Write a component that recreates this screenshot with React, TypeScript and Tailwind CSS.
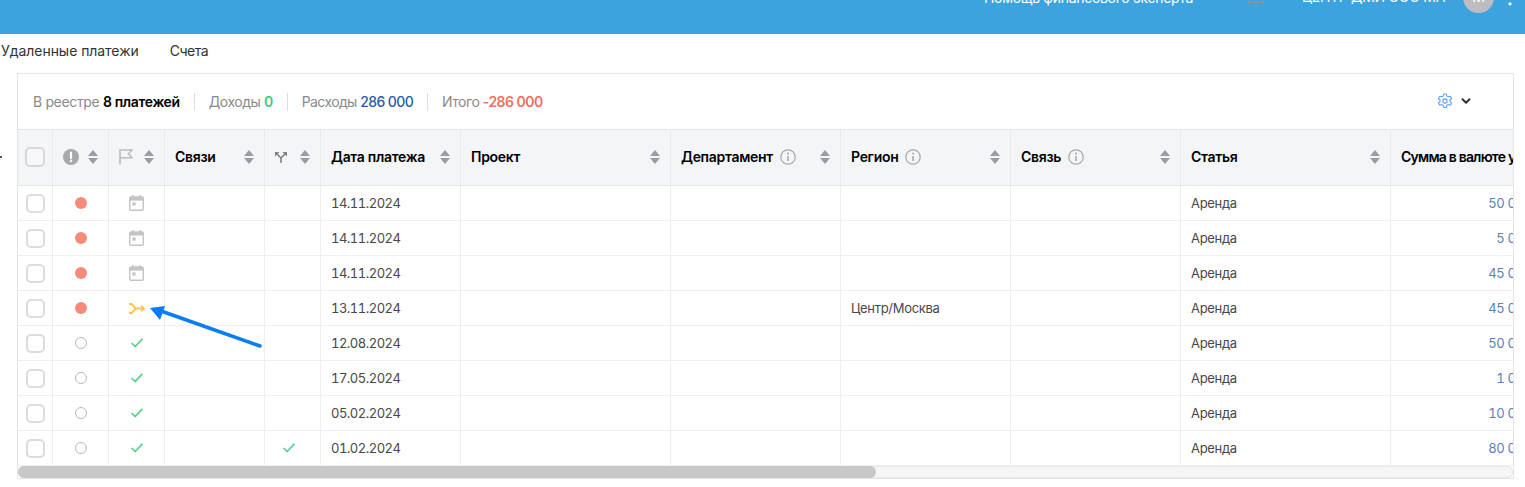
import { MoreVertical, ChevronDown, Bell } from "lucide-react";

const FONT = "font-['Inter','Noto_Sans',sans-serif]";

type Flag = "calendar" | "split" | "check";

interface IPayment {
  date: string;
  overdue: boolean;
  flag: Flag;
  linked?: boolean;
  region?: string;
  sum: string;
}

const payments: IPayment[] = [
  { date: "14.11.2024", overdue: true, flag: "calendar", sum: "50 000" },
  { date: "14.11.2024", overdue: true, flag: "calendar", sum: "5 000" },
  { date: "14.11.2024", overdue: true, flag: "calendar", sum: "45 000" },
  { date: "13.11.2024", overdue: true, flag: "split", region: "Центр/Москва", sum: "45 000" },
  { date: "12.08.2024", overdue: false, flag: "check", sum: "50 000" },
  { date: "17.05.2024", overdue: false, flag: "check", sum: "1 000" },
  { date: "05.02.2024", overdue: false, flag: "check", sum: "10 000" },
  { date: "01.02.2024", overdue: false, flag: "check", linked: true, sum: "80 000" },
];

function SortIcon() {
  return (
    <svg width="10" height="14" viewBox="0 0 10 14" className="shrink-0 ml-auto">
      <path d="M5 0 L10 6 L0 6 Z M0 8 L10 8 L5 14 Z" fill="#9b9ca3" />
    </svg>
  );
}

function InfoIcon() {
  return (
    <svg width="16" height="16" viewBox="0 0 16 16" fill="none" className="shrink-0 ml-[7px]">
      <circle cx="8" cy="8" r="7.2" stroke="#a9a9a9" strokeWidth="1.3" />
      <path d="M8 7 V12" stroke="#a9a9a9" strokeWidth="1.6" />
      <circle cx="8" cy="4.6" r="1" fill="#a9a9a9" />
    </svg>
  );
}

function AlertIcon() {
  return (
    <svg width="16" height="16" viewBox="0 0 16 16" className="shrink-0">
      <circle cx="8" cy="8" r="8" fill="#a8a8a8" />
      <path d="M8 3.5 V9.2" stroke="#fff" strokeWidth="2.2" strokeLinecap="round" />
      <circle cx="8" cy="12" r="1.2" fill="#fff" />
    </svg>
  );
}

function FlagIcon() {
  return (
    <svg width="14" height="16" viewBox="0 0 14 16" fill="none" className="shrink-0">
      <path d="M1 15.5 V1 H13 L9.5 4.8 L13 8.8 H1" stroke="#bdbdbd" strokeWidth="1.6" />
    </svg>
  );
}

function ForkIcon() {
  return (
    <svg width="12" height="11" viewBox="0 0 12 11" fill="none" className="shrink-0">
      <path d="M6 11 V6 L2 2 M6 6 L10 2" stroke="#808080" strokeWidth="1.6" />
      <path d="M0 0 H4.5 L0 4.5 Z M12 0 H7.5 L12 4.5 Z" fill="#808080" />
    </svg>
  );
}

function CalendarIcon() {
  return (
    <svg width="15" height="16" viewBox="0 0 15 16" fill="none">
      <rect x="0.7" y="2" width="13.6" height="13.3" rx="1.4" fill="#fff" stroke="#c4c4c4" strokeWidth="1.4" />
      <rect x="0.7" y="2" width="13.6" height="3.6" fill="#c4c4c4" />
      <rect x="3" y="0" width="1.5" height="3" fill="#c4c4c4" />
      <rect x="10.5" y="0" width="1.5" height="3" fill="#c4c4c4" />
      <rect x="3.4" y="7.4" width="3.2" height="3.2" fill="#c4c4c4" />
    </svg>
  );
}

function SplitIcon() {
  return (
    <svg width="16" height="11" viewBox="0 0 16 11" fill="none">
      <path d="M0 1 H2.6 L7 5.5 L2.6 10 H0 M7 5.5 H15" stroke="#ffc24d" strokeWidth="1.8" />
      <path d="M12 2.6 L15.2 5.5 L12 8.4" stroke="#ffc24d" strokeWidth="1.6" />
    </svg>
  );
}

function CheckIcon() {
  return (
    <svg width="12" height="10" viewBox="0 0 12 10" fill="none">
      <path d="M0.6 5 L4.2 8.6 L11.4 0.8" stroke="#5ccf90" strokeWidth="1.7" />
    </svg>
  );
}

function GearIcon() {
  return (
    <svg width="16" height="16" viewBox="0 0 24 24" fill="none" stroke="#5b9cf5" strokeWidth="1.6" strokeLinejoin="round">
      <path d="M10 1.5 h4 l.7 3.2 2 1.1 3.1-1 2 3.5-2.4 2.2 v2.2 l2.4 2.2-2 3.5-3.1-1-2 1.1-.7 3.2 h-4 l-.7-3.2-2-1.1-3.1 1-2-3.5 2.4-2.2 v-2.2 L2.2 8.3 l2-3.5 3.1 1 2-1.1 z" />
      <circle cx="12" cy="12" r="3.2" />
    </svg>
  );
}

function Box({ big }: { big?: boolean }) {
  return (
    <span
      className={
        big
          ? "block w-[20px] h-[20px] rounded-[5px] border-2 border-[#d8d8dc] bg-[#f8f8fa]"
          : "block w-[19px] h-[19px] rounded-[5px] border-2 border-[#dcdcdc] bg-white"
      }
    />
  );
}

// ширины колонок как на экране, последняя уходит за край
const COLS = ["w-[35px]", "w-[56px]", "w-[56px]", "w-[100px]", "w-[56px]", "w-[140px]", "w-[210px]", "w-[170px]", "w-[170px]", "w-[170px]", "w-[210px]", "w-[151px]"];

function Th({ col, children, sort = true }: { col: number; children?: React.ReactNode; sort?: boolean }) {
  return (
    <div className={`${COLS[col]} shrink-0 h-full flex items-center pl-[10px] pr-[10px] pb-[1px] border-r border-[#e9eaee] text-[14px] leading-none font-semibold tracking-[-0.3px] text-black whitespace-nowrap`}>
      {children}
      {sort && <SortIcon />}
    </div>
  );
}

function Td({ col, className = "", children }: { col: number; className?: string; children?: React.ReactNode }) {
  return (
    <div className={`${COLS[col]} shrink-0 h-full flex items-center border-r border-[#eeeeee] ${className}`}>
      {children}
    </div>
  );
}

function Row({ p }: { p: IPayment }) {
  return (
    <div className="flex h-[35px] border-b border-[#eeeeee] text-[13px] leading-none tracking-[-0.3px] text-[#484848]">
      <Td col={0} className="justify-center"><Box /></Td>
      <Td col={1} className="justify-center">
        {p.overdue ? (
          <span className="block w-[12px] h-[12px] rounded-full bg-[#f58b7b]" />
        ) : (
          <span className="block w-[12px] h-[12px] rounded-full border border-[#b4b7c4]" />
        )}
      </Td>
      <Td col={2} className="justify-center">
        {p.flag === "calendar" && <CalendarIcon />}
        {p.flag === "split" && <SplitIcon />}
        {p.flag === "check" && <CheckIcon />}
      </Td>
      <Td col={3} />
      <Td col={4} className="justify-center pr-[8px]">{p.linked && <CheckIcon />}</Td>
      <Td col={5} className="pl-[10px] tabular-nums tracking-[-0.5px]">{p.date}</Td>
      <Td col={6} />
      <Td col={7} />
      <Td col={8} className="pl-[10px]">{p.region}</Td>
      <Td col={9} />
      <Td col={10} className="pl-[10px]">Аренда</Td>
      <Td col={11} className="justify-end pr-[10px] tabular-nums text-[#5b80bd] border-r-0">{p.sum}</Td>
    </div>
  );
}

function App() {
  return (
    <div className={`relative w-[1525px] h-[487px] overflow-hidden bg-white ${FONT}`}>
      {/* шапка, верх обрезан скриншотом */}
      <header className="h-[34px] bg-[#3da3df] overflow-hidden">
        <div className="h-[32px] -mt-[18px] flex items-center text-white text-[14px] leading-none tracking-[-0.3px] whitespace-nowrap">
          <span className="ml-[984px] w-[210px]">Помощь финансового эксперта</span>
          <Bell size={22} strokeWidth={1} color="#8b9aa5" className="ml-[51px]" />
          <span className="ml-[35px] w-[144px] overflow-hidden -mt-[3px]">ЦЕНТР ДМИ ООО МАКС</span>
          <span className="ml-[17px] w-[31px] h-[31px] shrink-0 -mt-[2px] rounded-full bg-[#bdbdc1] flex items-center justify-center">М</span>
          <MoreVertical size={20} className="ml-[6px] shrink-0" />
        </div>
      </header>

      <nav className="h-[39px] pb-[5px] flex items-center text-[14px] leading-none text-[#333333]">
        <span className="ml-[1px] tracking-[-0.05px]">Удаленные платежи</span>
        <span className="ml-[31px] tracking-[-0.5px]">Счета</span>
      </nav>

      <span className="absolute left-0 top-[156px] w-[2px] h-[2px] bg-[#555555]" />

      <section className="ml-[17px] w-[1497px] h-[406px] border border-[#e4e4e4] overflow-hidden">
        <div className="h-[56px] flex items-center pl-[15px] pr-[40px] text-[14px] leading-none tracking-[-0.35px] text-[#8a8a8a] border-b border-[#e4e4e4] whitespace-nowrap">
          <span>В реестре <b className="font-semibold text-black">8 платежей</b></span>
          <span className="w-px h-[18px] bg-[#dddddd] mx-[14px]" />
          <span className="tracking-[-0.45px]">Доходы <b className="font-semibold text-[#3fc97f]">0</b></span>
          <span className="w-px h-[18px] bg-[#dddddd] mx-[14px]" />
          <span className="tracking-[-0.6px]">Расходы <b className="font-medium text-[#2b5aa8]">286 000</b></span>
          <span className="w-px h-[18px] bg-[#dddddd] mx-[14px]" />
          <span className="tracking-[-0.5px]">Итого <b className="font-semibold text-[#f0705f]">-286 000</b></span>
          <span className="ml-auto flex items-center gap-[6px] -mt-[2px]">
            <GearIcon />
            <ChevronDown size={14} strokeWidth={3.5} color="#333333" />
          </span>
        </div>

        <div className="overflow-hidden">
          <div className="w-[1600px]">
            <div className="flex h-[56px] bg-[#f4f5f9] border-b border-[#e4e5ea]">
              <div className={`${COLS[0]} shrink-0 h-full flex items-center justify-center pb-[1px] border-r border-[#e9eaee]`}>
                <Box big />
              </div>
              <Th col={1}><AlertIcon /></Th>
              <Th col={2}><FlagIcon /></Th>
              <Th col={3}>Связи</Th>
              <Th col={4}><ForkIcon /></Th>
              <Th col={5}>Дата платежа</Th>
              <Th col={6}>Проект</Th>
              <Th col={7}>Департамент<InfoIcon /></Th>
              <Th col={8}>Регион<InfoIcon /></Th>
              <Th col={9}>Связь<InfoIcon /></Th>
              <Th col={10}>Статья</Th>
              <Th col={11} sort={false}><span className="tracking-[-0.8px]">Сумма в валюте учета</span></Th>
            </div>
            {payments.map((p, i) => (
              <Row key={i} p={p} />
            ))}
          </div>
        </div>

        {/* полоса прокрутки */}
        <div className="h-[12px] rounded-full bg-[#f6f6f6] shadow-[inset_0_0_2px_#cccccc]">
          <div className="w-[858px] h-full rounded-full bg-[#c8c8c8]" />
        </div>
      </section>

      {/* стрелка-пометка поверх таблицы */}
      <svg className="absolute left-[145px] top-[300px]" width="122" height="50" viewBox="0 0 122 50" fill="none">
        <path d="M115 46 L16 11" stroke="#0a7cf5" strokeWidth="3.5" strokeLinecap="round" />
        <path d="M5 8 L20 6 L15 20 Z" fill="#0a7cf5" />
      </svg>
    </div>
  );
}

export default App;
